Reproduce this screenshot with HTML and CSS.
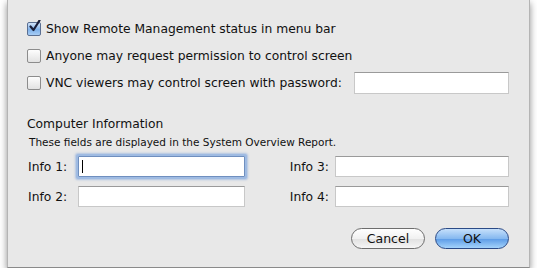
FILE: index.html
```html
<!DOCTYPE html>
<html lang="en">
<head>
    <meta charset="UTF-8">
    <title>Remote Management Settings</title>
    <link rel="stylesheet" href="styles.css">
</head>
<body>
    <div class="sheet">
        <label class="check-row">
            <span class="box checked">
                <svg width="13" height="13" viewBox="0 0 13 13"><path d="M2.5 6.5 L5.5 10 L11.5 0.5" fill="none" stroke="#1a1f3a" stroke-width="2.2" stroke-linecap="round" stroke-linejoin="round"/></svg>
            </span>
            Show Remote Management status in menu bar
        </label>
        <label class="check-row">
            <span class="box"></span>
            Anyone may request permission to control screen
        </label>
        <label class="check-row">
            <span class="box"></span>
            VNC viewers may control screen with password:
            <span class="field password"></span>
        </label>

        <div class="section">
            <h2>Computer Information</h2>
            <p class="hint">These fields are displayed in the System Overview Report.</p>
            <div class="info-grid">
                <div class="info-row">
                    <span class="info-label">Info 1:</span>
                    <span class="field focused"><span class="caret"></span></span>
                </div>
                <div class="info-row right">
                    <span class="info-label">Info 3:</span>
                    <span class="field"></span>
                </div>
                <div class="info-row">
                    <span class="info-label">Info 2:</span>
                    <span class="field"></span>
                </div>
                <div class="info-row right">
                    <span class="info-label">Info 4:</span>
                    <span class="field"></span>
                </div>
            </div>
        </div>

        <div class="buttons">
            <button class="btn">Cancel</button>
            <button class="btn primary">OK</button>
        </div>
    </div>
</body>
</html>
```

FILE: styles.css
```css
body {
    margin: 0;
    background: #fff;
    font-family: "DejaVu Sans", "Liberation Sans", sans-serif;
    color: #111;
}
.sheet {
    width: 523px;
    height: 268px;
    margin-left: 7px;
    box-sizing: border-box;
    background: #e8e8e8;
    border-left: 1px solid #b4b4b4;
    border-right: 1px solid #b4b4b4;
    border-bottom: 1px solid #8a8a8a;
    box-shadow: 0 3px 7px rgba(0,0,0,0.45);
    padding: 22px 19px 0 19px;
}
.check-row {
    display: flex;
    align-items: center;
    height: 14px;
    margin-bottom: 13px;
    font-size: 12.3px;
    white-space: nowrap;
}
.box {
    width: 12px;
    height: 12px;
    border: 1px solid #8c8c8c;
    border-radius: 2px;
    background: linear-gradient(#fdfdfd, #e2e2e2);
    margin-right: 5px;
    position: relative;
    flex: none;
}
.box.checked {
    background: linear-gradient(#d2e4fa, #7fb1ea 55%, #a7cdf5);
    border-color: #5a6f92;
}
.box svg {
    position: absolute;
    left: 0;
    top: -3px;
}
.field {
    display: block;
    height: 21px;
    box-sizing: border-box;
    background: #fff;
    border: 1px solid #c8c8c8;
    border-top-color: #9a9a9a;
}
.password {
    width: 155px;
    height: 22px;
    margin-left: auto;
    margin-right: 1px;
}
.section {
    margin-top: 26px;
}
.section h2 {
    font-size: 12.3px;
    font-weight: normal;
    margin: 0;
    line-height: 16px;
}
.hint {
    font-size: 10.5px;
    margin: 4px 0 0 2px;
    line-height: 13px;
}
.info-grid {
    display: grid;
    grid-template-columns: 226px 1fr;
    row-gap: 9px;
    margin-top: 7px;
    margin-left: 1px;
}
.info-row {
    display: flex;
    align-items: center;
    font-size: 12.3px;
}
.info-label {
    width: 50px;
    flex: none;
}
.info-row .field {
    width: 167px;
}
.info-row.right {
    justify-content: flex-end;
    padding-right: 1px;
}
.info-row.right .info-label {
    width: auto;
    margin-right: 6px;
}
.info-row.right .field {
    width: 174px;
}
.field.focused {
    border: 1px solid #6f8fbf;
    box-shadow: 0 0 0 2px #9fbbe2, 0 0 2px 3px rgba(120,160,220,0.5);
    border-radius: 1px;
    position: relative;
}
.caret {
    position: absolute;
    left: 3px;
    top: 3px;
    width: 1px;
    height: 13px;
    background: #000;
}
.buttons {
    display: flex;
    justify-content: flex-end;
    gap: 10px;
    margin-top: 21px;
    padding-right: 1px;
}
.btn {
    width: 74px;
    height: 21px;
    border-radius: 11px;
    border: 1px solid #6d6d6d;
    background: linear-gradient(#ffffff, #f1f1f1 50%, #e0e0e0 51%, #f6f6f6);
    font-family: "DejaVu Sans", "Liberation Sans", sans-serif;
    font-size: 12.5px;
    color: #111;
    padding: 0;
}
.btn.primary {
    border-color: #2b4a86;
    background: linear-gradient(#c6e0fb, #86b9f0 50%, #5b9ae6 51%, #a4d3fb);
}
```
